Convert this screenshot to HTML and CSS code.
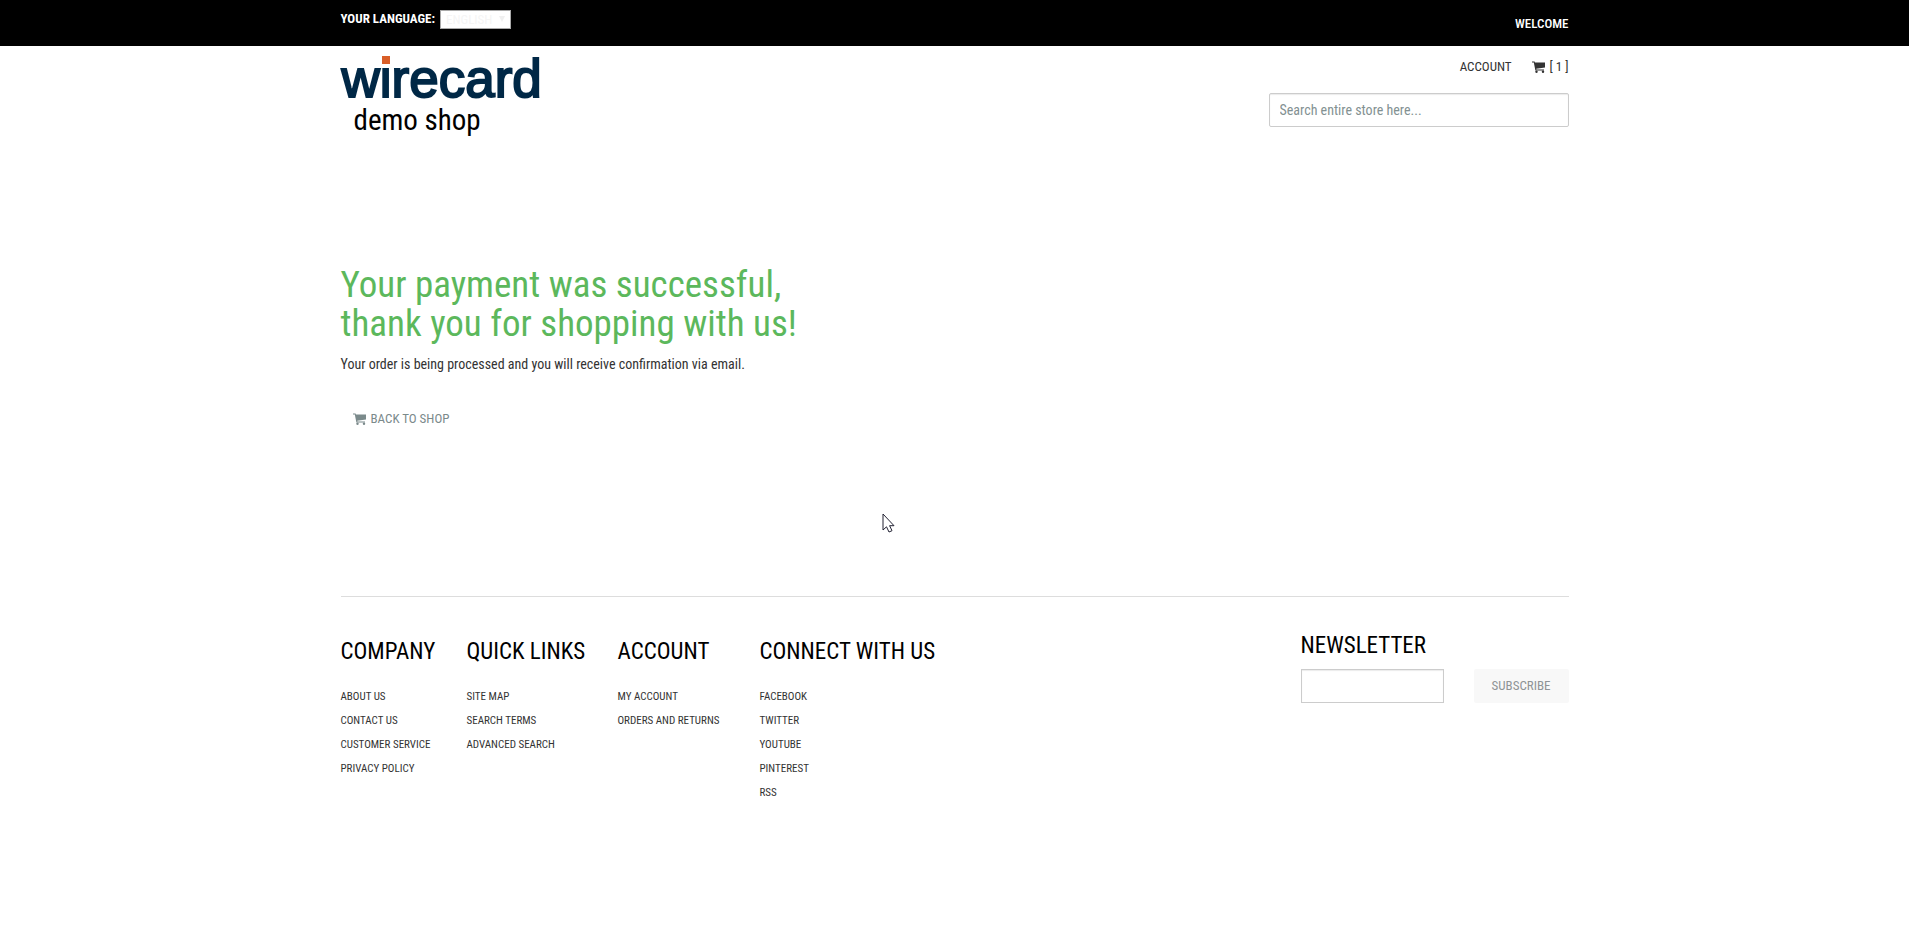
FILE: index.html
```html
<!DOCTYPE html>
<html lang="en">
<head>
<meta charset="utf-8">
<title>Wirecard demo shop</title>
<link rel="stylesheet" href="styles.css">
</head>
<body>
<svg class="sprite" aria-hidden="true">
  <symbol id="cart" viewBox="0 0 13 12">
    <path d="M0 0.500h2.600l0.300 1.100H13v5L4.200 7.700l0.200 0.900H12v1H3.400L1.800 1.500H0z"/>
    <circle cx="4.500" cy="10.800" r="1.200"/>
    <circle cx="11" cy="10.800" r="1.200"/>
  </symbol>
</svg>
<div class="topbar">
  <div class="container topbar-inner">
    <div class="language">
      <label for="lang">YOUR LANGUAGE:</label>
      <span class="select-wrap">
        <select id="lang"><option>ENGLISH</option></select>
        <span class="caret" aria-hidden="true"></span>
      </span>
    </div>
    <p class="welcome">WELCOME</p>
  </div>
</div>
<header class="container header">
  <a class="brand" href="#">
    <span class="logo">w<span class="logo-i">i</span>recard</span>
    <span class="tagline">demo shop</span>
  </a>
  <div class="tools">
    <nav class="account-nav">
      <a href="#">ACCOUNT</a>
      <a class="cart-link" href="#"><svg class="icon" aria-hidden="true"><use href="#cart"/></svg>[ 1 ]</a>
    </nav>
    <input class="field" type="search" aria-label="Search" placeholder="Search entire store here...">
  </div>
</header>
<main class="container main">
  <h1>Your payment was successful,<br>thank you for shopping with us!</h1>
  <p class="message">Your order is being processed and you will receive confirmation via email.</p>
  <a class="back" href="#"><svg class="icon" aria-hidden="true"><use href="#cart"/></svg>BACK TO SHOP</a>
</main>
<footer class="container">
  <div class="footer">
    <div class="columns">
      <section>
        <h2>COMPANY</h2>
        <ul>
          <li><a href="#">ABOUT US</a></li>
          <li><a href="#">CONTACT US</a></li>
          <li><a href="#">CUSTOMER SERVICE</a></li>
          <li><a href="#">PRIVACY POLICY</a></li>
        </ul>
      </section>
      <section>
        <h2>QUICK LINKS</h2>
        <ul>
          <li><a href="#">SITE MAP</a></li>
          <li><a href="#">SEARCH TERMS</a></li>
          <li><a href="#">ADVANCED SEARCH</a></li>
        </ul>
      </section>
      <section>
        <h2>ACCOUNT</h2>
        <ul>
          <li><a href="#">MY ACCOUNT</a></li>
          <li><a href="#">ORDERS AND RETURNS</a></li>
        </ul>
      </section>
      <section>
        <h2>CONNECT WITH US</h2>
        <ul>
          <li><a href="#">FACEBOOK</a></li>
          <li><a href="#">TWITTER</a></li>
          <li><a href="#">YOUTUBE</a></li>
          <li><a href="#">PINTEREST</a></li>
          <li><a href="#">RSS</a></li>
        </ul>
      </section>
    </div>
    <form class="newsletter">
      <h2><label for="email">NEWSLETTER</label></h2>
      <div class="newsletter-row">
        <input class="field" id="email" type="email">
        <button type="button">SUBSCRIBE</button>
      </div>
    </form>
  </div>
</footer>
<svg class="pointer" viewBox="0 0 13 20" aria-hidden="true"><path d="M1 1v16l3.500-3.200 2.500 5.200 3-1.300-2.400-5H12z"/></svg>
</body>
</html>
```
FILE: styles.css
```css
* { box-sizing: border-box; }
body {
  margin: 0;
  background: #fff;
  color: #333;
  font-family: "Roboto Condensed", Roboto, sans-serif;
  font-size: 13px;
  line-height: 20px;
}
a { color: inherit; text-decoration: none; }
h1, h2, p, ul { margin: 0; padding: 0; font-weight: 400; }
ul { list-style: none; }
input, select, button { font: inherit; }
.sprite { display: none; }
.container { width: 100%; max-width: 1228px; margin: 0 auto; }
.topbar { background: #000; color: #fff; }
.topbar-inner { display: flex; justify-content: space-between; padding: 9px 0 11px; min-height: 46px; }
.language { display: flex; gap: 5px; font-weight: 700; }
.select-wrap { position: relative; font-weight: 400; height: 20px; display: flex; align-items: center; }
select {
  appearance: none;
  width: 71px;
  height: 19px;
  padding: 0 5px;
  border: 1px solid #a9a9a9;
  border-radius: 0;
  background: #fff;
  color: #f5f5f5;
  line-height: 17px;
}
.caret {
  position: absolute;
  right: 6px;
  top: 7px;
  border: 3px solid transparent;
  border-top: 6px solid #f0f0f0;
  border-bottom: 0;
}
.welcome { padding-top: 5px; font-weight: 500; }
.header { display: flex; justify-content: space-between; padding-top: 10px; }
.brand { display: flex; flex-direction: column; }
.logo {
  padding-left: 1px;
  color: #002846;
  font: 53px/46px "Liberation Sans", Arial, sans-serif;
  -webkit-text-stroke: 2px #002846;
}
.logo-i { position: relative; }
.logo-i::before {
  content: "";
  position: absolute;
  left: 2px;
  top: 7px;
  width: 8px;
  height: 8px;
  background: #d95e28;
}
.tagline { padding-left: 13px; color: #000; font-size: 29px; line-height: 36px; }
.tools { width: 300px; padding-top: 1px; }
.account-nav { display: flex; justify-content: flex-end; gap: 20px; margin-bottom: 16px; }
.cart-link, .back { display: flex; align-items: center; gap: 5px; }
.icon { width: 13px; height: 12px; fill: currentColor; }
.field {
  display: block;
  width: 100%;
  height: 34px;
  padding: 6px 10px;
  border: 1px solid #ccc;
  border-radius: 2px;
  background: #fff;
  box-shadow: inset 0 1px 1px rgba(0, 0, 0, 0.08);
  font-size: 14px;
}
.field::placeholder { color: #839192; opacity: 1; }
.main { padding-top: 127px; }
h1 { color: #5cb85c; font-size: 37px; line-height: 39px; }
.message { margin-top: 11px; font-size: 14px; }
.back { width: fit-content; margin-top: 35px; padding-left: 12px; color: #7b8a8b; }
footer { padding-top: 167px; }
.footer { display: flex; justify-content: space-between; padding-top: 34px; border-top: 1px solid #ddd; }
.columns { display: grid; grid-template-columns: 126px 151px 142px auto; }
h2 { color: #000; font-size: 23px; line-height: 30px; }
.columns h2 { margin: 6px 0 18px; }
li { font-size: 11px; line-height: 24px; }
.newsletter { width: 268px; }
.newsletter-row { display: flex; gap: 30px; margin-top: 8px; }
.newsletter .field { flex: 1; min-width: 0; border-radius: 0; }
button {
  width: 95px;
  height: 34px;
  padding: 0;
  border: 0;
  border-radius: 2px;
  background: #f8f8f8;
  color: #8f9496;
}
.pointer {
  position: absolute;
  left: 882px;
  top: 513px;
  width: 13px;
  height: 20px;
  fill: #fff;
  stroke: #223;
}
```
